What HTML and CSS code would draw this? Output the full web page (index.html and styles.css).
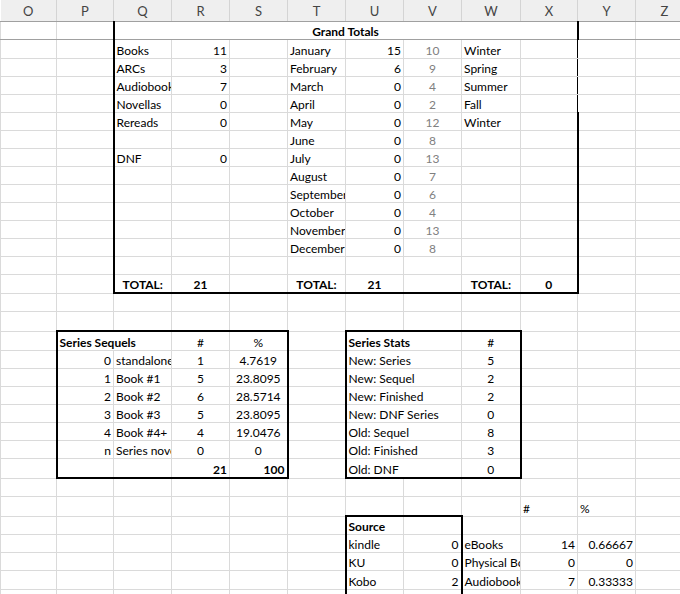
FILE: index.html
```html
<!DOCTYPE html>
<html>
<head>
<meta charset="utf-8">
<title>Reading stats</title>
<link rel="stylesheet" href="styles.css">
</head>
<body>
<table class="sheet">
<colgroup>
<col class="w56"><col class="w57"><col class="w58"><col class="w58"><col class="w58"><col class="w58"><col class="w58"><col class="w58"><col class="w59"><col class="w57"><col class="w58"><col class="w58">
</colgroup>
<thead>
<tr><th>O</th><th>P</th><th>Q</th><th>R</th><th>S</th><th>T</th><th>U</th><th>V</th><th>W</th><th>X</th><th>Y</th><th>Z</th></tr>
</thead>
<tbody>
<tr class="frz"><td></td><td></td><td colspan="8" class="b c bl br">Grand Totals</td><td></td><td></td></tr>
<tr class="h19"><td></td><td></td><td class="bl">Books</td><td class="r">11</td><td></td><td>January</td><td class="r">15</td><td class="c g">10</td><td>Winter</td><td class="brt"></td><td></td><td></td></tr>
<tr><td></td><td></td><td class="bl">ARCs</td><td class="r">3</td><td></td><td>February</td><td class="r">6</td><td class="c g">9</td><td>Spring</td><td class="brt"></td><td></td><td></td></tr>
<tr><td></td><td></td><td class="bl">Audiobooks</td><td class="r">7</td><td></td><td>March</td><td class="r">0</td><td class="c g">4</td><td>Summer</td><td class="brt"></td><td></td><td></td></tr>
<tr><td></td><td></td><td class="bl">Novellas</td><td class="r">0</td><td></td><td>April</td><td class="r">0</td><td class="c g">2</td><td>Fall</td><td class="brt"></td><td></td><td></td></tr>
<tr><td></td><td></td><td class="bl">Rereads</td><td class="r">0</td><td></td><td>May</td><td class="r">0</td><td class="c g">12</td><td>Winter</td><td class="br"></td><td></td><td></td></tr>
<tr><td></td><td></td><td class="bl"></td><td></td><td></td><td>June</td><td class="r">0</td><td class="c g">8</td><td></td><td class="br"></td><td></td><td></td></tr>
<tr><td></td><td></td><td class="bl">DNF</td><td class="r">0</td><td></td><td>July</td><td class="r">0</td><td class="c g">13</td><td></td><td class="br"></td><td></td><td></td></tr>
<tr><td></td><td></td><td class="bl"></td><td></td><td></td><td>August</td><td class="r">0</td><td class="c g">7</td><td></td><td class="br"></td><td></td><td></td></tr>
<tr><td></td><td></td><td class="bl"></td><td></td><td></td><td>September</td><td class="r">0</td><td class="c g">6</td><td></td><td class="br"></td><td></td><td></td></tr>
<tr><td></td><td></td><td class="bl"></td><td></td><td></td><td>October</td><td class="r">0</td><td class="c g">4</td><td></td><td class="br"></td><td></td><td></td></tr>
<tr><td></td><td></td><td class="bl"></td><td></td><td></td><td>November</td><td class="r">0</td><td class="c g">13</td><td></td><td class="br"></td><td></td><td></td></tr>
<tr><td></td><td></td><td class="bl"></td><td></td><td></td><td>December</td><td class="r">0</td><td class="c g">8</td><td></td><td class="br"></td><td></td><td></td></tr>
<tr><td></td><td></td><td class="bl"></td><td></td><td></td><td></td><td></td><td></td><td></td><td class="br"></td><td></td><td></td></tr>
<tr><td></td><td></td><td class="b c bl bb">TOTAL:</td><td class="b c bb">21</td><td class="bb"></td><td class="b c bb">TOTAL:</td><td class="b c bb">21</td><td class="bb"></td><td class="b c bb">TOTAL:</td><td class="b c br bb">0</td><td></td><td></td></tr>
<tr><td></td><td></td><td></td><td></td><td></td><td></td><td></td><td></td><td></td><td></td><td></td><td></td></tr>
<tr class="h19"><td></td><td></td><td></td><td></td><td></td><td></td><td></td><td></td><td></td><td></td><td></td><td></td></tr>
<tr class="h19"><td></td><td colspan="2" class="b bl bt">Series Sequels</td><td class="c bt">#</td><td class="c br bt">%</td><td></td><td colspan="2" class="b bl bt">Series Stats</td><td class="c br bt">#</td><td></td><td></td><td></td></tr>
<tr><td></td><td class="r bl">0</td><td>standalone</td><td class="c">1</td><td class="c br">4.7619</td><td></td><td colspan="2" class="bl">New: Series</td><td class="c br">5</td><td></td><td></td><td></td></tr>
<tr><td></td><td class="r bl">1</td><td>Book #1</td><td class="c">5</td><td class="c br">23.8095</td><td></td><td colspan="2" class="bl">New: Sequel</td><td class="c br">2</td><td></td><td></td><td></td></tr>
<tr><td></td><td class="r bl">2</td><td>Book #2</td><td class="c">6</td><td class="c br">28.5714</td><td></td><td colspan="2" class="bl">New: Finished</td><td class="c br">2</td><td></td><td></td><td></td></tr>
<tr><td></td><td class="r bl">3</td><td>Book #3</td><td class="c">5</td><td class="c br">23.8095</td><td></td><td colspan="2" class="bl">New: DNF Series</td><td class="c br">0</td><td></td><td></td><td></td></tr>
<tr><td></td><td class="r bl">4</td><td>Book #4+</td><td class="c">4</td><td class="c br">19.0476</td><td></td><td colspan="2" class="bl">Old: Sequel</td><td class="c br">8</td><td></td><td></td><td></td></tr>
<tr><td></td><td class="r bl">n</td><td>Series novellas</td><td class="c">0</td><td class="c br">0</td><td></td><td colspan="2" class="bl">Old: Finished</td><td class="c br">3</td><td></td><td></td><td></td></tr>
<tr class="h19"><td></td><td class="bl bb"></td><td class="bb"></td><td class="b r bb">21</td><td class="b r br bb">100</td><td></td><td colspan="2" class="bl bb">Old: DNF</td><td class="c br bb">0</td><td></td><td></td><td></td></tr>
<tr><td></td><td></td><td></td><td></td><td></td><td></td><td></td><td></td><td></td><td></td><td></td><td></td></tr>
<tr class="h19"><td></td><td></td><td></td><td></td><td></td><td></td><td></td><td></td><td></td><td>#</td><td>%</td><td></td></tr>
<tr><td></td><td></td><td></td><td></td><td></td><td></td><td class="b bl bt">Source</td><td class="br bt"></td><td></td><td></td><td></td><td></td></tr>
<tr><td></td><td></td><td></td><td></td><td></td><td></td><td class="bl">kindle</td><td class="r br">0</td><td>eBooks</td><td class="r">14</td><td class="r">0.66667</td><td></td></tr>
<tr><td></td><td></td><td></td><td></td><td></td><td></td><td class="bl">KU</td><td class="r br">0</td><td>Physical Books</td><td class="r">0</td><td class="r">0</td><td></td></tr>
<tr class="h19"><td></td><td></td><td></td><td></td><td></td><td></td><td class="bl">Kobo</td><td class="r br">2</td><td>Audiobooks</td><td class="r">7</td><td class="r">0.33333</td><td></td></tr>
<tr class="h20"><td></td><td></td><td></td><td></td><td></td><td></td><td class="bl"></td><td class="br"></td><td></td><td></td><td></td><td></td></tr>
</tbody>
</table>
</body>
</html>
```

FILE: styles.css
```css
html, body {
  margin: 0;
  padding: 0;
  background: #ffffff;
  overflow: hidden;
}

body {
  width: 680px;
  height: 594px;
}

.sheet {
  border-collapse: collapse;
  table-layout: fixed;
  width: 693px;
  font-family: Lato, "Liberation Sans", sans-serif;
  font-size: 12px;
  color: #000000;
}

.w56 { width: 56px; }
.w57 { width: 57px; }
.w58 { width: 58px; }
.w59 { width: 59px; }

.sheet th {
  height: 21px;
  padding: 0;
  background: #efefef;
  color: #444444;
  font-weight: normal;
  font-size: 13px;
  border-right: 1px solid #d4d4d4;
  border-bottom: 1px solid #a0a0a0;
}

.sheet td {
  height: 17px;
  padding: 0 2px;
  border: 1px solid #dadada;
  white-space: nowrap;
  overflow: hidden;
  vertical-align: bottom;
  line-height: 15px;
}

.sheet tr.h19 td { height: 18px; }
.sheet tr.h20 td { height: 19px; }
.sheet tr.frz td { border-bottom-color: #a0a0a0; }

.sheet td.r { text-align: right; }
.sheet td.c { text-align: center; }
.sheet td.b { font-weight: bold; }
.sheet td.g { color: #808080; }

.sheet td.bl { border-left: 2px solid #000000; }
.sheet td.br { border-right: 2px solid #000000; }
.sheet td.bt { border-top: 2px solid #000000; }
.sheet td.bb { border-bottom: 2px solid #000000; }
.sheet td.brt { border-right: 1px solid #000000; }
```
